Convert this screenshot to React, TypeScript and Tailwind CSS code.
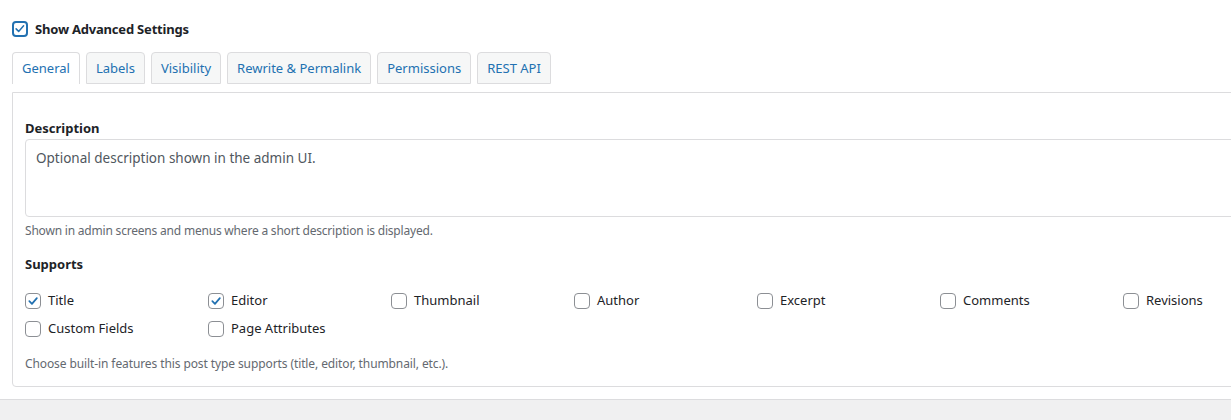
import { useState } from 'react';

const tabs = ['General', 'Labels', 'Visibility', 'Rewrite & Permalink', 'Permissions', 'REST API'];

const supports = [
    { key: 'title', label: 'Title', checked: true },
    { key: 'editor', label: 'Editor', checked: true },
    { key: 'thumbnail', label: 'Thumbnail', checked: false },
    { key: 'author', label: 'Author', checked: false },
    { key: 'excerpt', label: 'Excerpt', checked: false },
    { key: 'comments', label: 'Comments', checked: false },
    { key: 'revisions', label: 'Revisions', checked: false },
    { key: 'custom-fields', label: 'Custom Fields', checked: false },
    { key: 'page-attributes', label: 'Page Attributes', checked: false },
];

const Check = ({ big = false }: { big?: boolean }) => (
    <svg viewBox="0 0 16 16" className="w-full h-full">
        <polyline
            points={big ? '2.8,7.8 6.2,11.2 12.8,3.8' : '3.8,8.2 6.8,11.2 12.4,4.8'}
            fill="none"
            stroke="#2271b1"
            strokeWidth="2"
            strokeLinecap="round"
            strokeLinejoin="round"
        />
    </svg>
);

const App = () => {
    const [advanced, setAdvanced] = useState(true);
    const [active, setActive] = useState('General');
    const [checked, setChecked] = useState<Record<string, boolean>>(
        Object.fromEntries(supports.map((s) => [s.key, s.checked]))
    );

    return (
        <div className="bg-white overflow-hidden font-['Noto_Sans',sans-serif] text-[13px] text-[#1d2327]">
            <div className="px-3 pt-[21px]">
                {/* Advanced toggle */}
                <label className="flex items-center gap-[7px] cursor-pointer h-4">
                    <span
                        onClick={() => setAdvanced(!advanced)}
                        className="w-4 h-4 rounded-[4px] border-2 border-[#2271b1] bg-white flex items-center justify-center"
                    >
                        {advanced && <Check big />}
                    </span>
                    <span className="font-bold leading-4 tracking-[-0.2px]">Show Advanced Settings</span>
                </label>

                {/* Tabs */}
                <div className="flex gap-[6px] mt-[15px]">
                    {tabs.map((tab) => (
                        <button
                            key={tab}
                            onClick={() => setActive(tab)}
                            className={
                                tab === active
                                    ? 'h-8 px-[9px] rounded-t-[4px] border border-b-0 border-[#dcdcde] bg-white text-[#2271b1] leading-none'
                                    : 'h-8 px-[9px] rounded-t-[4px] border border-[#dcdcde] bg-[#f6f7f7] text-[#2271b1] leading-none'
                            }
                        >
                            {tab}
                        </button>
                    ))}
                </div>

                {/* Panel */}
                <div className="mt-2 w-[1300px] border border-[#dcdcde] rounded-b-[4px] px-[12px] pt-[26px] pb-[14px]">
                    <div className="font-bold leading-[18px]">Description</div>
                    <textarea
                        className="mt-[2px] block w-full h-[78px] border border-[#dcdcde] rounded-[4px] px-[10px] pt-[8px] text-[13.5px] leading-5 text-[#50575e] resize-none outline-none"
                        defaultValue="Optional description shown in the admin UI."
                    />
                    <p className="mt-[6px] text-[12px] leading-4 text-[#646970] tracking-[-0.2px]">
                        Shown in admin screens and menus where a short description is displayed.
                    </p>

                    <div className="mt-[16px] font-bold leading-[18px]">Supports</div>
                    <div className="mt-[16px] grid grid-cols-[repeat(7,183px)] gap-y-1">
                        {supports.map((s) => (
                            <label key={s.key} className="flex items-center gap-[7px] h-6 cursor-pointer">
                                <span
                                    onClick={() => setChecked({ ...checked, [s.key]: !checked[s.key] })}
                                    className="w-4 h-4 rounded-[4px] border border-[#8c8f94] bg-white flex items-center justify-center"
                                >
                                    {checked[s.key] && <Check />}
                                </span>
                                <span>{s.label}</span>
                            </label>
                        ))}
                    </div>
                    <p className="mt-[15px] text-[12px] leading-4 text-[#646970] tracking-[-0.1px]">
                        Choose built-in features this post type supports (title, editor, thumbnail, etc.).
                    </p>
                </div>
            </div>
            <div className="mt-3 h-[21px] border-t border-[#dcdcde] bg-[#f0f0f1]"></div>
        </div>
    );
};

export default App;
